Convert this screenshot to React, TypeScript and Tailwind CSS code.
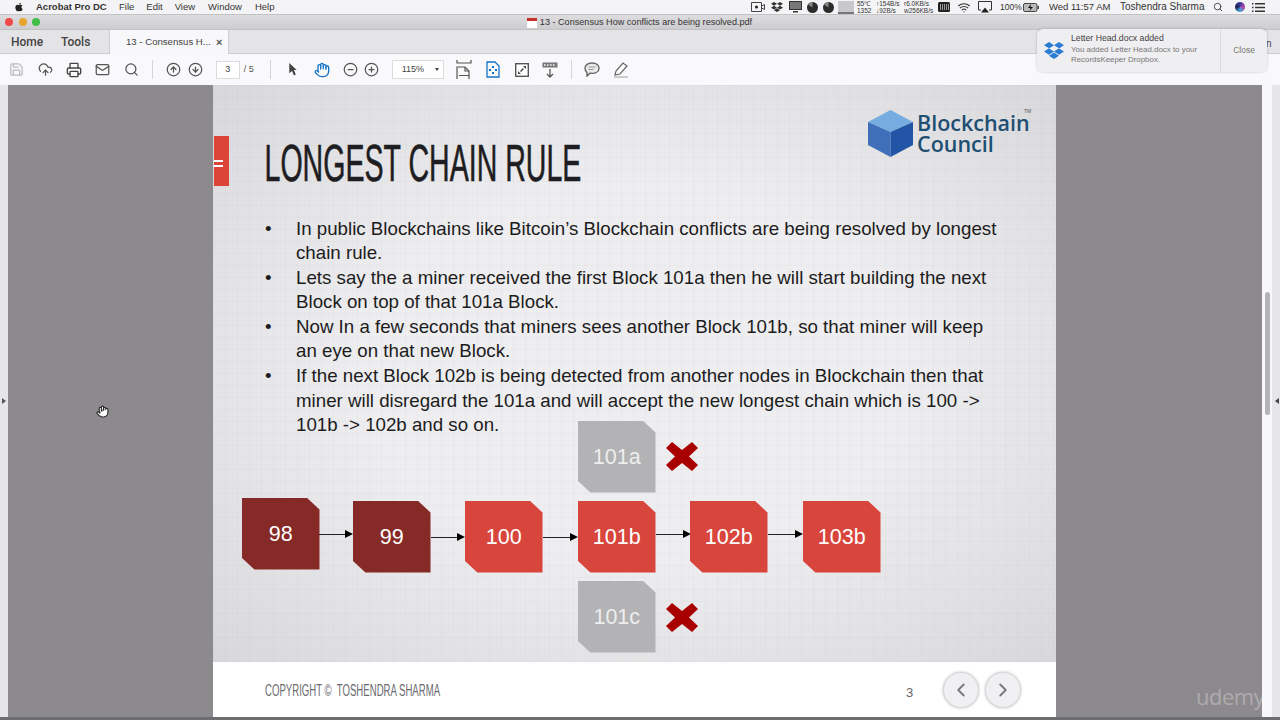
import { Save, CloudUpload, Printer, Mail, Search, CircleArrowUp, CircleArrowDown, Hand, CircleMinus, CirclePlus, Wifi, ChevronLeft, ChevronRight } from "lucide-react";
import { FaApple, FaDropbox } from "react-icons/fa";

const sans = "font-['Liberation_Sans',Arial,sans-serif]";

function BigX({ className }: { className: string }) {
  return (
    <svg viewBox="0 0 32 29" className={`absolute h-[29px] w-[32px] ${className}`}>
      <polygon fill="#a80000" points="6,0 16,8 26,0 32,6 23,14.5 32,23 26,29 16,21 6,29 0,23 9,14.5 0,6" />
    </svg>
  );
}

function Block({ label, color, className }: { label: string; color: string; className: string }) {
  return (
    <div className={`absolute flex h-[71.5px] w-[77.5px] items-center justify-center pt-[1px] text-[21.5px] [clip-path:polygon(0_0,84%_0,100%_16%,100%_100%,16%_100%,0_84%)] ${color} ${className}`}>
      {label}
    </div>
  );
}

function Arrow({ className }: { className: string }) {
  return (
    <div className={`absolute flex h-[8px] items-center ${className}`}>
      <div className="h-px flex-1 bg-[#222]" />
      <div className="h-0 w-0 border-y-[4px] border-l-[8px] border-y-transparent border-l-black" />
    </div>
  );
}

function FitWidthIcon() {
  return (
    <svg viewBox="0 0 16 20" className="h-[20px] w-[16px]" fill="none" stroke="#555" strokeWidth="1.2">
      <path d="M1 0v3h14V0M1 19V7h8l4 4v8" />
      <path d="M9 7v4h4M3 15.5h10" />
    </svg>
  );
}

function OrganizeIcon() {
  return (
    <svg viewBox="0 0 14 17" className="h-[17px] w-[14px]" fill="none" stroke="#1473c7" strokeWidth="1.3">
      <path d="M1 1h8l4 4v11H1z" />
      <path fill="#1473c7" stroke="none" d="M6 5h2v2H6zM3 8h2v2H3zM9 8h2v2H9zM6 11h2v2H6z" />
    </svg>
  );
}

function ExpandIcon() {
  return (
    <svg viewBox="0 0 14 14" className="h-[14px] w-[14px]">
      <rect x="0.7" y="0.7" width="12.6" height="12.6" fill="#fff" stroke="#555" strokeWidth="1.4" />
      <path fill="#444" d="M8 3h3v3zM6 11H3V8zM5 8l3-3 1 1-3 3z" />
    </svg>
  );
}

function StampIcon() {
  return (
    <svg viewBox="0 0 16 16" className="h-[16px] w-[16px]" fill="none" stroke="#555" strokeWidth="1.3">
      <rect x="0.5" y="0.5" width="15" height="5" fill="#777" stroke="none" />
      <path d="M2 3h12" stroke="#fff" strokeDasharray="1.5 1.5" />
      <path d="M8 7v8M5 12l3 3 3-3" />
    </svg>
  );
}

function CommentIcon() {
  return (
    <svg viewBox="0 0 16 15" className="h-[15px] w-[16px]" fill="#e9e9e9" stroke="#666" strokeWidth="1.4">
      <path d="M8 1c4 0 7 2 7 5.2s-3 5.2-7 5.2c-.8 0-1.5 0-2-.2L3 14v-3.4C1.800 9.600 1 8 1 6.200 1 3 4 1 8 1z" />
      <path d="M4.500 5h7M4.500 7.500h5" stroke="#999" strokeWidth="1" />
    </svg>
  );
}

function PenIcon() {
  return (
    <svg viewBox="0 0 16 16" className="h-[16px] w-[16px]">
      <path d="M1 14h14v2H1z" fill="#ccc" />
      <path d="M2 13l1-4 7-8 4 3-7 8z" fill="#fff" stroke="#666" strokeWidth="1.2" />
    </svg>
  );
}

function VideoStatusIcon() {
  return (
    <svg viewBox="0 0 14 10" className="h-[10px] w-[14px]" fill="none" stroke="#444">
      <path d="M.5.500h10v9H.5zM10.500 4l3-1.500v5l-3-1.500" />
      <circle cx="5.500" cy="5" r="1.500" fill="#222" stroke="none" />
    </svg>
  );
}

function Monitor() {
  return (
    <svg viewBox="0 0 13 12" className="h-[12px] w-[13px]">
      <path d="M0 0h13v9H0z" fill="#333" />
      <path d="M1 1h11v7H1z" fill="#777" />
      <path d="M4 10h5v1.500H4z" fill="#333" />
    </svg>
  );
}

function Pie() {
  return (
    <svg viewBox="0 0 11 11" className="h-[11px] w-[11px]">
      <circle cx="5.500" cy="5.500" r="5.500" fill="#2c2c2c" />
      <path d="M5.500 5.500V0A5.500 5.500 0 0 0 1 2.500z" fill="#888" />
    </svg>
  );
}

function MemIcon() {
  return (
    <svg viewBox="0 0 12 10" className="h-[10px] w-[12px]">
      <rect width="12" height="10" rx="1.500" fill="#222" />
      <path d="M2 2h1v6H2zM4 2h1v6H4zM6 2h1v6H6zM8 2h1v6H8zM10 2h1v6h-1z" fill="#999" />
    </svg>
  );
}

function AirPlay() {
  return (
    <svg viewBox="0 0 14 12" className="h-[12px] w-[14px]" fill="none" stroke="#333">
      <path d="M3 9H.5V.5h13V9H11" />
      <path d="M7 6.500l4 5H3z" fill="#222" stroke="none" />
    </svg>
  );
}

function Battery() {
  return (
    <svg viewBox="0 0 16 9" className="h-[9px] w-[16px]">
      <rect x="0.500" y="0.500" width="13.500" height="8" rx="1.500" fill="#bbb" stroke="#444" />
      <rect x="14.500" y="3" width="1.500" height="3" fill="#444" />
      <path d="M8 1L5 5h2.500L6.500 8 10 4H7.500z" fill="#111" />
    </svg>
  );
}

function Siri() {
  return <div className="h-[10px] w-[10px] rounded-full bg-[conic-gradient(#3b3a9e,#b545a8,#41a4dc,#1c1c50,#3b3a9e)]" />;
}

function ListIcon() {
  return (
    <svg viewBox="0 0 13 9" className="h-[9px] w-[13px]" fill="#333">
      <path d="M0 0h1.500v1.500H0zM3 0h10v1.500H3zM0 3.700h1.500v1.500H0zM3 3.700h10v1.500H3zM0 7.400h1.500v1.500H0zM3 7.400h10v1.500H3z" />
    </svg>
  );
}

function MenuBar() {
  return (
    <div className="flex h-[14px] shrink-0 items-center bg-[#f4f3f5] text-[9.5px] leading-none text-[#333]">
      <FaApple className="ml-[14px] h-[10px] w-[10px] text-[#222]" />
      <span className="ml-[12px] w-[71px] whitespace-nowrap font-bold">Acrobat Pro DC</span>
      <span className="ml-[12px]">File</span>
      <span className="ml-[12px]">Edit</span>
      <span className="ml-[12px]">View</span>
      <span className="ml-[13px]">Window</span>
      <span className="ml-[13px]">Help</span>
      <div className="ml-auto flex items-center">
        <VideoStatusIcon />
        <FaDropbox className="ml-[6px] h-[12px] w-[12px] text-[#333]" />
        <div className="ml-[6px]"><Monitor /></div>
        <div className="ml-[5px]"><Pie /></div>
        <div className="ml-[5px]"><Pie /></div>
        <div className="ml-[4px] flex h-[13px] w-[16px] items-end bg-[#c9c8ca]"><div className="h-[2px] w-full bg-[#777]" /></div>
        <div className="ml-[3px] w-[14px] text-[6.5px] leading-[7px]">55℃<br />1352</div>
        <div className="ml-[5px] w-[25px] whitespace-nowrap text-[6.5px] leading-[7px]">↑154B/s<br />↓92B/s</div>
        <div className="ml-[3px] w-[29px] whitespace-nowrap text-[6.5px] leading-[7px]">r6.0KB/s<br />w256KB/s</div>
        <div className="ml-[5px]"><MemIcon /></div>
        <Wifi className="ml-[7px] h-[13px] w-[14px] text-[#333]" />
        <div className="ml-[7px]"><AirPlay /></div>
        <span className="ml-[8px] w-[19px] text-[8.5px]">100%</span>
        <div className="ml-[4px]"><Battery /></div>
        <span className="ml-[10px] w-[61px] whitespace-nowrap">Wed 11:57 AM</span>
        <span className="ml-[10px] w-[82px] whitespace-nowrap text-[10px]">Toshendra Sharma</span>
        <Search className="ml-[11px] h-[10px] w-[10px] text-[#333]" />
        <div className="ml-[12px]"><Siri /></div>
        <div className="ml-[7px] mr-[15px]"><ListIcon /></div>
      </div>
    </div>
  );
}

function TitleBar() {
  return (
    <div className="relative flex h-[16px] shrink-0 items-center justify-center border-y border-[#c2c1c3] bg-[linear-gradient(#dddcde,#cdccce)] pt-[2px]">
      <div className="absolute left-[5px] top-[3px] flex gap-[5.500px]">
        <div className="h-[8px] w-[8px] rounded-full bg-[#f0494a]" />
        <div className="h-[8px] w-[8px] rounded-full bg-[#e6a52e]" />
        <div className="h-[8px] w-[8px] rounded-full bg-[#3fbf48]" />
      </div>
      <div className="ml-[-1px] flex items-center gap-[3px]">
        <div className="h-[10px] w-[10px] border-t-[3px] border-[#c9302c] bg-white" />
        <span className="text-[9.1px] leading-none text-[#333]">13 - Consensus How conflicts are being resolved.pdf</span>
      </div>
    </div>
  );
}

function TabBar() {
  return (
    <div className="relative flex h-[24px] shrink-0 items-stretch border-b border-[#cfced0] bg-[#e4e3e6]">
      <span className="ml-[11px] w-[50px] self-center font-['Roboto',sans-serif] text-[12px] font-medium text-[#444]">Home</span>
      <span className="w-[48px] self-center font-['Roboto',sans-serif] text-[12px] font-medium text-[#444]">Tools</span>
      <div className="mb-[-1px] flex w-[120px] items-center border-x border-[#cfced0] bg-[#f8f7f9] text-[9.6px] text-[#444]">
        <span className="ml-[16px] w-[84px] whitespace-nowrap">13 - Consensus H...</span>
        <span className="ml-[6px] text-[11px] font-bold leading-none text-[#555]">×</span>
      </div>
    </div>
  );
}

function Tool({ children }: { children: React.ReactNode }) {
  return <div className="flex w-[28.75px] items-center justify-center">{children}</div>;
}

function Toolbar() {
  const ic = "h-[15px] w-[15px] text-[#555]";
  return (
    <div className="flex h-[31px] shrink-0 items-center bg-[#f9f8fa]">
      <div className="ml-[2px] flex">
        <Tool><Save className="h-[15px] w-[15px] text-[#bcbbbd]" /></Tool>
        <Tool><CloudUpload className={ic} /></Tool>
        <Tool><Printer className="h-[16px] w-[16px] text-[#444]" /></Tool>
        <Tool><Mail className={ic} /></Tool>
        <Tool><Search className={ic} /></Tool>
      </div>
      <div className="ml-[6px] h-[19px] w-px bg-[#d5d4d6]" />
      <div className="ml-[10px] flex">
        <div className="flex w-[22px] justify-center"><CircleArrowUp className={ic} /></div>
        <div className="flex w-[22px] justify-center"><CircleArrowDown className={ic} /></div>
      </div>
      <div className="ml-[9px] flex h-[18px] w-[24px] items-center justify-center border border-[#dcdbdd] bg-white text-[9px] text-[#444]">3</div>
      <span className="ml-[4px] w-[14px] text-[9px] text-[#555]">/ 5</span>
      <div className="ml-[12px] h-[19px] w-px bg-[#d5d4d6]" />
      <svg viewBox="0 0 10 14" className="ml-[17px] h-[13px] w-[10px]"><path d="M1 0l8 7.500H6l2 5-2 1-2-5L1 11z" fill="#444" /></svg>
      <Hand className="ml-[16px] h-[16px] w-[16px] text-[#1473c7]" />
      <CircleMinus className="ml-[13px] h-[15px] w-[15px] text-[#555]" />
      <CirclePlus className="ml-[6px] h-[15px] w-[15px] text-[#555]" />
      <div className="ml-[13px] flex h-[19px] w-[52px] items-center border border-[#dcdbdd] bg-white pl-[9px] text-[9px] text-[#444]">
        115%
        <div className="ml-auto mr-[4px] h-0 w-0 border-x-[2.500px] border-t-[3px] border-x-transparent border-t-[#444]" />
      </div>
      <div className="ml-[12px]"><FitWidthIcon /></div>
      <div className="ml-[14px]"><OrganizeIcon /></div>
      <div className="ml-[15px]"><ExpandIcon /></div>
      <div className="ml-[13px]"><StampIcon /></div>
      <div className="ml-[13px] h-[19px] w-px bg-[#d5d4d6]" />
      <div className="ml-[12px]"><CommentIcon /></div>
      <div className="ml-[13px]"><PenIcon /></div>
    </div>
  );
}

function Logo() {
  return (
    <div className="absolute left-[655px] top-[25px] flex items-center">
      <svg viewBox="0 0 45 47" className="h-[47px] w-[45px]">
        <polygon points="22.500,0 45,12 22.500,22 0,12" fill="#75ade0" />
        <polygon points="0,12 22.500,22 22.500,47 0,35" fill="#3f6fb8" />
        <polygon points="22.500,22 45,12 45,35 22.500,47" fill="#2355a6" />
      </svg>
      <div className="ml-[4px] mt-[-2px] font-['Open_Sans',sans-serif] text-[21.5px] font-semibold leading-[21px] text-[#1d4f73]">
        Blockchain<br />Council
      </div>
      <span className="absolute left-[156px] top-[-1px] text-[5px] leading-none text-[#555]">TM</span>
    </div>
  );
}

function Slide() {
  const grey = "bg-[#b3b2b5] text-[#eeeeee]";
  const red = "bg-[#d8453d] text-white";
  const dark = "bg-[#862a27] text-white";
  return (
    <div className={`w-[843px] shrink-0 bg-white ${sans}`}>
      <div className="relative h-[577px] overflow-hidden bg-[linear-gradient(rgba(0,0,0,.02)_1px,transparent_1px),linear-gradient(90deg,rgba(0,0,0,.02)_1px,transparent_1px),radial-gradient(ellipse_at_center,#eeedf0_45%,#d8d7d9_100%)] bg-size-[12px_12px,12px_12px,100%_100%]">
        <div className="absolute left-px top-[51px] flex h-[50px] w-[15px] flex-col gap-[3px] bg-[#db4437] pt-[24px]">
          <div className="h-[2px] w-[9px] bg-white" />
          <div className="h-[2px] w-[9px] bg-white" />
        </div>
        <Logo />
        <h1 className="w-[560px] origin-left scale-x-[0.56] whitespace-nowrap pl-[92px] pt-[50px] text-[51px] font-normal leading-[58px] text-[#1e1e22] [-webkit-text-stroke:0.6px_#1e1e22]">
          LONGEST CHAIN RULE
        </h1>
        <ul className="ml-[52px] mt-[23.5px] text-[18.72px] leading-[24.6px] text-[#1c1c1c]">
          {[
            ["In public Blockchains like Bitcoin’s Blockchain conflicts are being resolved by longest", "chain rule."],
            ["Lets say the a miner received the first Block 101a then he will start building the next", "Block on top of that 101a Block."],
            ["Now In a few seconds that miners sees another Block 101b, so that miner will keep", "an eye on that new Block."],
            ["If the next Block 102b is being detected from another nodes in Blockchain then that", "miner will disregard the 101a and will accept the new longest chain which is 100 ->", "101b -> 102b and so on."],
          ].map((lines) => (
            <li key={lines[0]} className="flex">
              <span className="w-[31px] shrink-0">•</span>
              <div className="whitespace-nowrap">
                {lines.map((l) => (
                  <div key={l}>{l}</div>
                ))}
              </div>
            </li>
          ))}
        </ul>

        {/* diagram nodes */}
        <Block label="101a" color={grey} className="left-[365px] top-[336px]" />
        <BigX className="left-[453px] top-[357px]" />
        <Block label="98" color={dark} className="left-[29px] top-[413px]" />
        <Arrow className="left-[106px] top-[445px] w-[34px]" />
        <Block label="99" color={dark} className="left-[140px] top-[416px]" />
        <Arrow className="left-[218px] top-[448px] w-[34px]" />
        <Block label="100" color={red} className="left-[252px] top-[416px]" />
        <Arrow className="left-[330px] top-[448px] w-[35px]" />
        <Block label="101b" color={red} className="left-[365px] top-[416px]" />
        <Arrow className="left-[443px] top-[445px] w-[35px]" />
        <Block label="102b" color={red} className="left-[477px] top-[416px]" />
        <Arrow className="left-[555px] top-[445px] w-[35px]" />
        <Block label="103b" color={red} className="left-[590px] top-[416px]" />
        <Block label="101c" color={grey} className="left-[365px] top-[496px]" />
        <BigX className="left-[453px] top-[518px]" />
      </div>
      <div className="flex h-[55px] items-center">
        <div className="ml-[52px] mt-[2px] w-[320px] origin-left scale-x-[0.6] whitespace-nowrap text-[16px] text-[#6b6b70]">
          COPYRIGHT ©&nbsp; TOSHENDRA SHARMA
        </div>
        <span className="ml-[321px] mt-[6px] text-[13px] text-[#666]">3</span>
        <div className="ml-[30px] flex gap-[6px]">
          <div className="flex h-[36px] w-[36px] items-center justify-center rounded-full border border-[#d8d7d9] bg-[#f0eff1] shadow-[0_0_3px_rgba(0,0,0,.25)]">
            <ChevronLeft className="h-[22px] w-[22px] text-[#77767a]" />
          </div>
          <div className="flex h-[36px] w-[36px] items-center justify-center rounded-full border border-[#d8d7d9] bg-[#f0eff1] shadow-[0_0_3px_rgba(0,0,0,.25)]">
            <ChevronRight className="h-[22px] w-[22px] text-[#77767a]" />
          </div>
        </div>
      </div>
    </div>
  );
}

function Toast() {
  return (
    <div className={`absolute left-[1037px] top-[29px] flex h-[43px] w-[230px] items-stretch rounded-[6px] bg-[#efeef0] shadow-[0_0_3px_rgba(0,0,0,.2)] ${sans}`}>
      <FaDropbox className="ml-[7px] mt-[11px] h-[21px] w-[20px] text-[#2b7cd3]" />
      <div className="ml-[7px] w-[149px] pt-[4px]">
        <div className="text-[8.7px] leading-[11px] text-[#444]">Letter Head.docx added</div>
        <div className="mt-[1px] text-[7.9px] leading-[10px] text-[#777]">You added Letter Head.docx to your<br />RecordsKeeper Dropbox.</div>
      </div>
      <div className="flex flex-1 items-center justify-center border-l border-[#dbdadc] text-[8.5px] text-[#777]">Close</div>
    </div>
  );
}

export default function App() {
  return (
    <div className={`relative flex h-[720px] w-[1280px] flex-col overflow-hidden bg-[#e6e5e8] ${sans}`}>
      <MenuBar />
      <TitleBar />
      <TabBar />
      <Toolbar />
      <div className="flex min-h-0 flex-1">
        <div className="flex w-[8px] shrink-0 items-center bg-[#e6e5e8]">
          <div className="ml-[2px] h-0 w-0 border-y-[3.500px] border-l-[4px] border-y-transparent border-l-[#555]" />
        </div>
        <div className="flex min-w-0 flex-1 justify-center bg-[#8d8a8d]">
          <div className="ml-[205px] mr-[206px] flex shrink-0">
            <Slide />
          </div>
        </div>
        <div className="flex w-[10px] shrink-0 justify-center bg-[#f8f7fa] pt-[207px]">
          <div className="h-[123px] w-[5px] rounded-full bg-[#b5b3b7]" />
        </div>
        <div className="flex w-[8px] shrink-0 items-center justify-end bg-[#e6e5e8]">
          <div className="mr-[1px] h-0 w-0 border-y-[3.500px] border-r-[4px] border-y-transparent border-r-[#444]" />
        </div>
      </div>
      <div className="h-[3px] shrink-0 bg-[#6e6d70]" />

      {/* stuff floating over the window */}
      <span className="absolute left-[1266px] top-[36px] text-[10px] text-[#444]">n</span>
      <Toast />
      <Hand className="absolute left-[96px] top-[405px] h-[13px] w-[13px] fill-white text-[#222]" />
      <span className="absolute left-[1196px] top-[680px] font-['Open_Sans',sans-serif] text-[22px] leading-[32px] tracking-[-0.5px] text-white/30">udemy</span>
    </div>
  );
}
